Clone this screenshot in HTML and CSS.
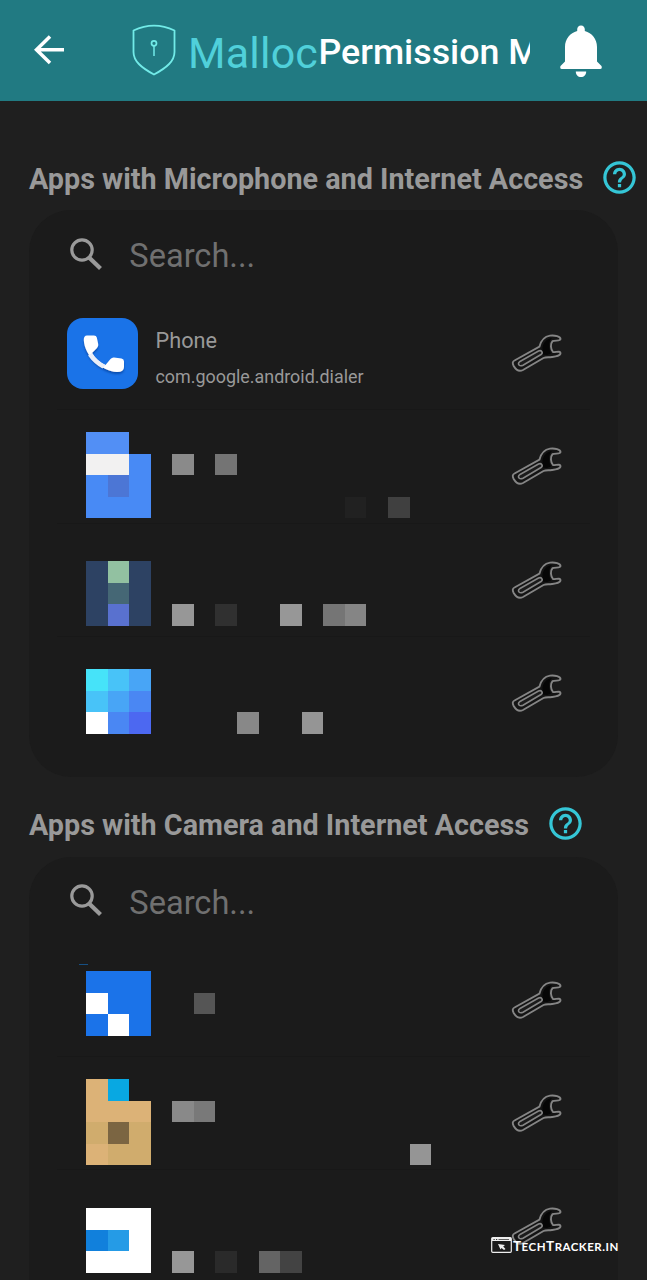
FILE: index.html
```html
<!DOCTYPE html>
<html lang="en">
<head>
<meta charset="utf-8">
<title>Malloc Permission Manager</title>
<link rel="stylesheet" href="styles.css">
</head>
<body>
<svg class="defs" width="0" height="0">
  <symbol id="wrench" viewBox="0 0 54 42">
    <path d="M4.500 28.500 L29.500 14.500 C31 8.500 34.500 4.500 40 3.600 C45 3 50.500 4.500 50.500 7 C50.500 9.500 45 8 42.500 9.200 C40.200 12 40.500 17 43 20 C45 20.600 50.500 18.500 50.500 21 C50.500 24 46 24.500 42 25 C38 25.500 36 24.700 33.500 26 L13 38 C9.500 39.700 6 38 3.700 34 C2.200 31.200 2.500 29.500 4.500 28.500 Z" fill="#141414" stroke="#858585" stroke-width="1.900"/>
    <path d="M32.500 15.500 C33.500 10 37 6.500 42 6 L40 8.500 C38.300 13 39 17.500 41 21.500 L37 23 L32.500 22.500 Z" fill="#060606"/>
    <path d="M9.500 29.800 L28.500 19 C31.500 17.700 33.500 20.700 31 22.500 L13 33.200 C9.500 35 7 31.800 9.500 29.800 Z" fill="#1b1b1b" stroke="#858585" stroke-width="1.600"/>
  </symbol>
  <symbol id="search" viewBox="0 0 34 34">
    <circle cx="13" cy="13" r="10.200" fill="none" stroke="#9a9a9a" stroke-width="3.200"/>
    <path d="M19.800 20.200 L31.500 31.500" stroke="#9a9a9a" stroke-width="4.200"/>
  </symbol>
  <symbol id="help" viewBox="0 0 24 24">
    <path fill="#35c6d6" d="M11 18h2v-2h-2v2zm1-16C6.480 2 2 6.480 2 12s4.480 10 10 10 10-4.480 10-10S17.520 2 12 2zm0 18c-4.410 0-8-3.590-8-8s3.590-8 8-8 8 3.590 8 8-3.590 8-8 8zm0-14c-2.210 0-4 1.790-4 4h2c0-1.100.9-2 2-2s2 .9 2 2c0 2-3 1.750-3 5h2c0-2.250 3-2.500 3-5 0-2.210-1.790-4-4-4z"/>
  </symbol>
</svg>

<header class="topbar">
  <svg class="back" viewBox="0 0 32 32"><path d="M17 2.500 L3.500 15.800 L17 29 M3.500 15.800 H31" fill="none" stroke="#fff" stroke-width="3.500"/></svg>
  <svg class="shield" viewBox="0 0 44 52">
    <path d="M1.500 6.500 Q22 -3.200 42.500 6.500 V28 C42.500 37 35 43.500 22 50.500 C9 43.500 1.500 37 1.500 28 Z" fill="none" stroke="#72ebe8" stroke-width="1.800" stroke-linejoin="round"/>
    <circle cx="22" cy="19.300" r="2.500" fill="none" stroke="#72ebe8" stroke-width="1.700"/>
    <path d="M22 21.800 V32" stroke="#72ebe8" stroke-width="1.500"/>
  </svg>
  <span class="brand">Malloc</span>
  <span class="title">Permission Manager</span>
  <svg class="bell" viewBox="0 0 42 53">
    <path d="M21 .5 C23.500 .5 24.800 2.200 24.800 4.500 V6 C32 7.800 37 14 37 22 V36.500 L41.500 41 Q42.500 44 40 44 H2 Q-.5 44 .5 41 L5 36.500 V22 C5 14 10 7.800 17.200 6 V4.500 C17.200 2.200 18.500 .5 21 .5 Z M15.800 46.500 H26.200 C26.200 50 24 52 21 52 C18 52 15.800 50 15.800 46.500 Z" fill="#fff"/>
  </svg>
</header>

<main class="content">
  <section class="group">
    <h2 class="heading"><span class="heading-text">Apps with Microphone and Internet Access</span><svg class="help"><use href="#help"/></svg></h2>
    <div class="card">
      <div class="search"><svg class="search-icon"><use href="#search"/></svg><span class="placeholder">Search...</span></div>
      <div class="row">
        <svg class="app-icon" viewBox="0 0 71 71">
          <defs><filter id="drop" x="-20%" y="-20%" width="150%" height="150%"><feDropShadow dx="0" dy="2" stdDeviation="1.300" flood-color="#003a90" flood-opacity=".65"/></filter></defs>
          <rect width="71" height="71" rx="16" fill="#1a73e8"/>
          <g filter="url(#drop)">
            <path d="M20 17.500 H27 Q29.300 17.500 29.800 19.500 L31.200 26 Q31.600 28.500 30 30 L25 35 Q30 43 38.500 47 L43.500 41 Q45 39.300 47 39.500 L54.500 40.500 Q57 41 57 43.500 V49 Q57 54 50 54 C34 53 17.500 38 16.800 22 Q16.700 17.500 20 17.500 Z" fill="#fff"/>
          </g>
          <path d="M25 35 Q30 43 38.500 47 L35.500 50.500 Q27 46 21 37.500 Z" fill="#e9eef8"/>
        </svg>
        <div class="app-text"><span class="app-name">Phone</span><span class="app-id">com.google.android.dialer</span></div>
        <svg class="wrench"><use href="#wrench"/></svg>
      </div>
      <div class="row">
        <svg class="mosaic tall" viewBox="0 0 16 4" shape-rendering="crispEdges">
          <path d="M0 0h2v1h1v3h-3z" fill="#488af5"/><path d="M0 0h2v1h-2z" fill="#528ff5"/><path d="M0 1h2v1h-2z" fill="#f2f1f1"/><path d="M1 2h1v1h-1z" fill="#4c76d5"/>
          <path d="M4 1h1v1h-1z" fill="#8a8a8a"/><path d="M6 1h1v1h-1z" fill="#747474"/><path d="M12 3h1v1h-1z" fill="#212121"/><path d="M14 3h1v1h-1z" fill="#404040"/>
        </svg>
        <svg class="wrench"><use href="#wrench"/></svg>
      </div>
      <div class="row">
        <svg class="mosaic low" viewBox="0 0 16 3" shape-rendering="crispEdges">
          <path d="M0 0h3v3h-3z" fill="#2d4263"/><path d="M1 0h1v1h-1z" fill="#92c1a1"/><path d="M1 1h1v1h-1z" fill="#456775"/><path d="M1 2h1v1h-1z" fill="#5971cf"/>
          <path d="M4 2h1v1h-1zM9 2h1v1h-1z" fill="#979797"/><path d="M6 2h1v1h-1z" fill="#303030"/><path d="M11 2h1v1h-1z" fill="#757575"/><path d="M12 2h1v1h-1z" fill="#858585"/>
        </svg>
        <svg class="wrench"><use href="#wrench"/></svg>
      </div>
      <div class="row">
        <svg class="mosaic mid" viewBox="0 0 16 3" shape-rendering="crispEdges">
          <path d="M0 0h1v1h-1z" fill="#46e3f9"/><path d="M1 0h1v1h-1zM0 1h1v1h-1z" fill="#48c3f8"/><path d="M2 0h1v1h-1zM1 1h1v1h-1z" fill="#48a5f6"/><path d="M2 1h1v1h-1zM1 2h1v1h-1z" fill="#4a87f3"/><path d="M0 2h1v1h-1z" fill="#fff"/><path d="M2 2h1v1h-1z" fill="#4c68f1"/>
          <path d="M7 2h1v1h-1z" fill="#888"/><path d="M10 2h1v1h-1z" fill="#959595"/>
        </svg>
        <svg class="wrench"><use href="#wrench"/></svg>
      </div>
    </div>
  </section>

  <section class="group">
    <h2 class="heading"><span class="heading-text">Apps with Camera and Internet Access</span><svg class="help"><use href="#help"/></svg></h2>
    <div class="card">
      <div class="search"><svg class="search-icon"><use href="#search"/></svg><span class="placeholder">Search...</span></div>
      <div class="row">
        <svg class="mosaic first" viewBox="0 0 16 3" shape-rendering="crispEdges">
          <path d="M-.32-.34h.4v.06h-.4z" fill="#164f82"/>
          <path d="M0 0h3v3h-3z" fill="#1b73e9"/><path d="M0 1h1v1h-1zM1 2h1v1h-1z" fill="#fff"/>
          <path d="M5 1h1v1h-1z" fill="#555"/>
        </svg>
        <svg class="wrench"><use href="#wrench"/></svg>
      </div>
      <div class="row">
        <svg class="mosaic tall second" viewBox="0 0 16 4" shape-rendering="crispEdges">
          <path d="M0 0h1v1h2v3h-3z" fill="#dcb277"/><path d="M0 2h3v1h-3zM1 3h2v1h-2z" fill="#d0ac6d"/><path d="M1 0h1v1h-1z" fill="#08a8e2"/><path d="M1 2h1v1h-1z" fill="#7b6542"/>
          <path d="M4 1h1v1h-1z" fill="#898989"/><path d="M5 1h1v1h-1z" fill="#797979"/><path d="M15 3h1v1h-1z" fill="#959595"/>
        </svg>
        <svg class="wrench"><use href="#wrench"/></svg>
      </div>
      <div class="row">
        <svg class="mosaic low" viewBox="0 0 16 3" shape-rendering="crispEdges">
          <path d="M0 0h3v3h-3z" fill="#fff"/><path d="M0 1h1v1h-1z" fill="#1180dc"/><path d="M1 1h1v1h-1z" fill="#259be6"/>
          <path d="M4 2h1v1h-1z" fill="#979797"/><path d="M6 2h1v1h-1z" fill="#2a2a2a"/><path d="M8 2h1v1h-1z" fill="#646464"/><path d="M9 2h1v1h-1z" fill="#434343"/>
        </svg>
        <svg class="wrench"><use href="#wrench"/></svg>
      </div>
    </div>
  </section>
</main>

<div class="watermark">
  <svg class="window" viewBox="0 0 21 16">
    <rect x=".7" y=".7" width="19.600" height="14.600" rx="1" fill="#1b1b1b" stroke="#eee" stroke-width="1.200"/>
    <path d="M1 1h19v3h-19z" fill="#eee"/><path d="M2.500 2h1.200v1h-1.200zM5 2h1.200v1h-1.200zM7.500 2h10.500v.8h-10.500z" fill="#333"/>
    <path d="M7 7 L14 8 L12.200 9.500 L14.500 12 L13 13 L10.500 11 L9.500 12.500 Z" fill="#eee"/>
  </svg>
  <span class="mark">T<small>ECH</small>T<small>RACKER.</small><small>IN</small></span>
</div>
</body>
</html>
```

FILE: styles.css
```css
* { box-sizing: border-box; }
html, body { height: 1280px; overflow: hidden; }
body { margin: 0; position: relative; background: #1f1f1f; font-family: Roboto, "Liberation Sans", sans-serif; color: #999; }
svg { display: block; flex: none; }
.defs { position: absolute; }

.topbar { display: flex; align-items: flex-start; height: 101px; background: #217a82; white-space: nowrap; }
.back { width: 32px; height: 32px; margin: 33.500px 0 0 33px; }
.shield { width: 44px; height: 52px; margin: 23.500px 0 0 67.300px; }
.brand { width: 130px; margin: 27px 0 0 11.700px; font-size: 43px; line-height: 52px; color: #50d0da; letter-spacing: .2px; }
.title { width: 212px; margin: 27px 0 0 .5px; overflow: hidden; font-size: 35.800px; line-height: 50px; font-weight: 500; color: #fff; }
.bell { width: 42px; height: 53px; margin: 24.500px 0 0 30px; }

.content { height: 1179px; overflow: hidden; padding: 56px 29px 0; }
.group { height: 646.500px; }
.heading { display: flex; align-items: center; height: 53px; margin: 0; padding-bottom: 9px; white-space: nowrap; font-size: 28.750px; font-weight: 700; line-height: 44px; color: #999; }
.heading-text { margin-top: -1px; }
.help { width: 39px; height: 39px; margin: 0 0 3.500px 17px; }
.card { height: 567px; border-radius: 42px; background: #1b1b1b; }
.search { display: flex; align-items: center; height: 87px; padding-left: 40px; }
.search-icon { width: 34px; height: 34px; }
.placeholder { margin: 5px 0 0 26.300px; font-size: 32.600px; line-height: 44px; color: #707070; }
.row { display: flex; align-items: flex-start; height: 113.300px; margin: 0 28px; padding-left: 9px; border-bottom: 1px solid #181818; }
.row:last-child { border-bottom: 0; }
.app-icon { width: 71px; height: 71px; margin: 20.500px 0 0 .5px; }
.app-text { display: flex; flex-direction: column; gap: 8px; margin: 30px 0 0 18px; }
.app-name { font-size: 21.700px; line-height: 28px; }
.app-id { font-size: 17.900px; line-height: 28px; }
.mosaic { width: 345.200px; height: 64.700px; margin-left: 20.450px; overflow: visible; }
.mosaic.tall { height: 86.300px; margin-top: 21.350px; }
.mosaic.second { margin-top: 22px; }
.mosaic.low { margin-top: 37.500px; }
.mosaic.mid { margin-top: 32px; }
.mosaic.first { margin-top: 27.300px; }
.wrench { width: 54px; height: 42px; margin: 35px 26.500px 0 auto; }

.watermark { position: absolute; left: 491px; top: 1237px; display: flex; align-items: center; gap: 1px; height: 16px; color: #fff; }
.window { width: 21px; height: 16px; }
.mark { padding-top: 3px; font: 700 13.500px/16px Lato, sans-serif; letter-spacing: .5px; white-space: nowrap; }
.mark small { font-size: 11.500px; }
```
